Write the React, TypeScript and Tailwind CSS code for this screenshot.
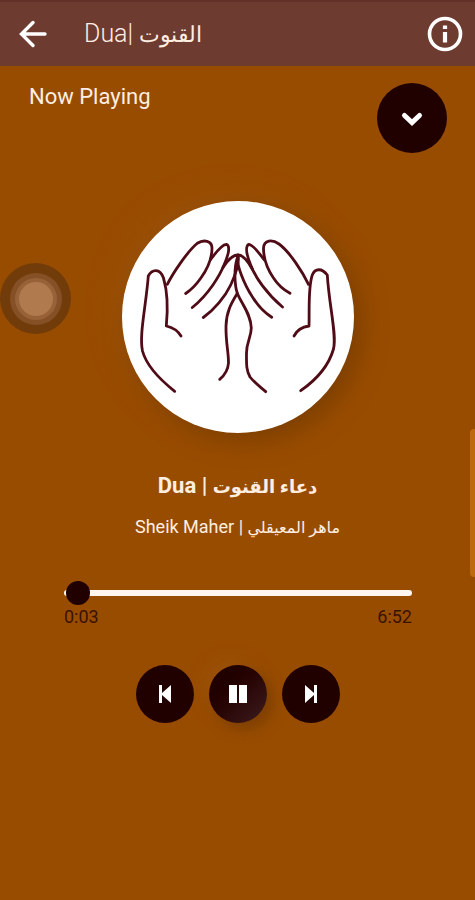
import { useState } from "react";

const DURATION = 412;

function formatTime(seconds: number) {
  return `${Math.floor(seconds / 60)}:${String(seconds % 60).padStart(2, "0")}`;
}

function PrayingHands() {
  return (
    <svg
      viewBox="0 0 232 232"
      className="w-full h-full"
      fill="none"
      stroke="#4f0c16"
      strokeWidth="2.8"
      strokeLinecap="round"
      strokeLinejoin="round"
      aria-hidden="true"
    >
      {/* left hand */}
      <path d="M52.7 190.3C41 181 25 167 20.500 150C17 134 24 105 26.3 75C30 68 38 67 41.500 77C45 89 46 108 44.3 125C51 126.500 56 130 59 135" />
      <path d="M45.300 83.300C51 72 65 51 75.300 42.300C82 38 90 40 90 47C90 58 84 70 78.700 77.300C74 84 69 89 63.700 92.500" />
      <path d="M88.700 58.500C93 53 99 43.500 104.300 43.300C109 45 106 55 102 64C98 74 87 93 70.300 106.500" />
      <path d="M101 66.500C105 60 111 54 116 54C117.500 60 116 68 108.700 84C103 96 92 109 81.300 116.500" />
      <path d="M115.300 92.300C110 101 104.300 110 104 125C103.700 142 106.500 150 106.500 162C106 169 103 174 97.700 178.300" />
      {/* right hand */}
      <path d="M178.700 189.700C194 179 207 164 211.500 148C215 134 207 104 205.300 74C200 67 193 67 190.300 74C186 86 187.500 108 187 125C180 126 175 129 172 135" />
      <path d="M186.500 83.300C181 72 168 51 157 43C150 38 142 39 141.500 47C141.500 58 146 69 151.500 77C156 84 162 89 168 92.300" />
      <path d="M142.500 59C138 54 132 43.500 126.500 43.300C123 46 125 55 128.700 64C133 76 145 93 160.500 106" />
      <path d="M130.500 68.500C126 60 121 54 116 54C113 62 123 85 130.300 95.700C136 105 143 112 149.700 116.300" />
      <path d="M115 58C112 68 112.500 84 115.300 92.300C119 102 129 113 129.300 127C129 137 124.500 141 124.500 152C124.500 162 124 169 128 176C132 181 138 186 143.700 190.700" />
    </svg>
  );
}

export default function App() {
  const [position, setPosition] = useState(3);

  return (
    <div className="relative min-h-screen flex flex-col overflow-hidden bg-[#984c00] text-[#fdeee2] font-[Roboto,'DejaVu_Sans',sans-serif]">
      <header className="h-[66px] flex items-center pl-4 pr-3 bg-[#6e3b30] border-t-2 border-[#633028]">
        <button aria-label="Back" className="w-8 h-8">
          <svg viewBox="0 0 32 32" className="w-8 h-8" fill="none" stroke="#fff" strokeWidth="3.4" strokeLinecap="round">
            <path d="M29 16H6M17 4.500L5.500 16l11.500 11.500" />
          </svg>
        </button>
        <h1 className="flex-1 ml-9 text-[25px] leading-8 font-light">
          Dua| <span className="text-[22px]">القنوت</span>
        </h1>
        <button aria-label="Info" className="w-9 h-9">
          <svg viewBox="0 0 36 36" className="w-9 h-9" fill="none" stroke="#fff" strokeWidth="3.6">
            <circle cx="18" cy="18" r="15.500" />
            <path d="M18 16v10.500M18 9.500v3.600" strokeWidth="4.200" />
          </svg>
        </button>
      </header>

      <main className="flex flex-col items-center">
        <div className="w-full flex justify-between items-start pt-[17px] pl-[29px] pr-7">
          <h2 className="text-[22px] leading-7">Now Playing</h2>
          <button
            aria-label="Minimize player"
            className="w-[70px] h-[70px] flex items-center justify-center rounded-full bg-[#210000]"
          >
            <svg viewBox="0 0 24 24" className="w-6 h-6" fill="none" stroke="#fff" strokeWidth="5" strokeLinecap="round">
              <path d="M4.500 9.500L12 16.500l7.500-7" />
            </svg>
          </button>
        </div>

        <div className="w-[232px] h-[232px] mt-12 rounded-full bg-white shadow-[8px_8px_24px_#7d3f00,-8px_-8px_24px_#9c520a]">
          <PrayingHands />
        </div>

        <h3 className="mt-[39px] text-[22px] leading-7 font-bold">
          Dua | <span className="text-[18px]">دعاء القنوت</span>
        </h3>
        <p className="mt-3 text-[18px] leading-7">
          Sheik Maher | <span className="text-[16px]">ماهر المعيقلي</span>
        </p>

        <div className="w-full mt-[39px] pl-16 pr-[63px]">
          <input
            type="range"
            aria-label="Seek"
            min={0}
            max={DURATION}
            value={position}
            onChange={(e) => setPosition(Number(e.target.value))}
            className="block w-full h-6 appearance-none bg-transparent [&::-webkit-slider-runnable-track]:h-1.5 [&::-webkit-slider-runnable-track]:rounded-full [&::-webkit-slider-runnable-track]:bg-[#fff6ef] [&::-webkit-slider-thumb]:appearance-none [&::-webkit-slider-thumb]:w-6 [&::-webkit-slider-thumb]:h-6 [&::-webkit-slider-thumb]:-mt-[9px] [&::-webkit-slider-thumb]:rounded-full [&::-webkit-slider-thumb]:bg-[#210000]"
          />
          <div className="flex justify-between text-[18px] leading-6 text-[#3b1200]">
            <span>{formatTime(position)}</span>
            <span>{formatTime(DURATION)}</span>
          </div>
        </div>

        <div className="mt-9 flex gap-[15px]">
          <button
            aria-label="Previous"
            className="w-[58px] h-[58px] flex items-center justify-center rounded-full bg-[#210000]"
          >
            <svg viewBox="0 0 20 20" className="w-5 h-5" fill="#fff">
              <path d="M4 1h3v8l9-8v18l-9-8v8H4z" />
            </svg>
          </button>
          <button
            aria-label="Pause"
            className="w-[58px] h-[58px] flex items-center justify-center rounded-full bg-linear-to-br from-[#210000] from-30% to-[#3c1c20] shadow-[6px_6px_14px_#7d3f00,-6px_-6px_14px_#9c520a]"
          >
            <svg viewBox="0 0 20 20" className="w-5 h-5" fill="#fff">
              <path d="M1 1h8v18H1zM11 1h8v18h-8z" />
            </svg>
          </button>
          <button
            aria-label="Next"
            className="w-[58px] h-[58px] flex items-center justify-center rounded-full bg-[#210000]"
          >
            <svg viewBox="0 0 20 20" className="w-5 h-5" fill="#fff">
              <path d="M16 1h-3v8L4 1v18l9-8v8h3z" />
            </svg>
          </button>
        </div>
      </main>

      {/* floating touch button */}
      <button
        aria-label="Assistive touch"
        className="absolute left-0 top-[263px] w-[71px] h-[71px] flex items-center justify-center rounded-full bg-[#713c09]"
      >
        <span className="w-[52px] h-[52px] flex items-center justify-center rounded-full bg-[#865027]">
          <span className="w-[42px] h-[42px] flex items-center justify-center rounded-full bg-[#986238]">
            <span className="w-[34px] h-[34px] rounded-full bg-[#b17a4e]" />
          </span>
        </span>
      </button>
      {/* edge panel handle */}
      <div className="absolute right-0 top-[429px] w-[5px] h-[148px] rounded-l-sm bg-[#bd6a0c]" />
    </div>
  );
}
